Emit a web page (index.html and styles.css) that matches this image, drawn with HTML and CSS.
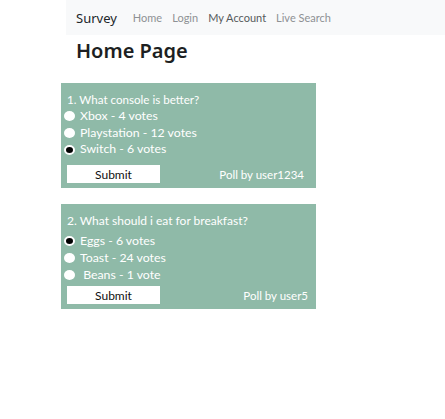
FILE: index.html
```html
<!DOCTYPE html>
<html>
<head>
<meta charset="utf-8">
<link rel="stylesheet" href="styles.css">
</head>
<body>
<nav class="navbar">
  <span class="brand">Survey</span>
  <a class="nav-link">Home</a>
  <a class="nav-link">Login</a>
  <a class="nav-link active">My Account</a>
  <a class="nav-link">Live Search</a>
</nav>
<h1 class="title">Home Page</h1>
<main class="polls">
  <form class="poll">
    <div class="question">1. What console is better?</div>
    <label class="option"><span class="radio"></span>Xbox - 4 votes</label>
    <label class="option"><span class="radio"></span>Playstation - 12 votes</label>
    <label class="option"><span class="radio checked"></span>Switch - 6 votes</label>
    <div class="poll-footer">
      <button type="button" class="submit">Submit</button>
      <span class="author">Poll by user1234</span>
    </div>
  </form>
  <form class="poll">
    <div class="question q2">2. What should i eat for breakfast?</div>
    <label class="option"><span class="radio checked"></span>Eggs - 6 votes</label>
    <label class="option"><span class="radio"></span>Toast - 24 votes</label>
    <label class="option"><span class="radio"></span>&nbsp;Beans - 1 vote</label>
    <div class="poll-footer f2">
      <button type="button" class="submit">Submit</button>
      <span class="author">Poll by user5</span>
    </div>
  </form>
</main>
</body>
</html>
```
FILE: styles.css
```css
body {
  margin: 0;
  background: #fff;
  font-family: "Noto Sans", "Open Sans", sans-serif;
}
.navbar {
  margin-left: 66px;
  height: 35px;
  background: #f8f9fa;
  display: flex;
  align-items: center;
  padding: 0 10px;
  gap: 10px;
}
.brand {
  font-size: 13px;
  color: #212529;
  margin-right: 6px;
}
.nav-link {
  font-family: "Lato", sans-serif;
  font-size: 11px;
  color: #8e9194;
}
.nav-link.active {
  color: #56595c;
}
.title {
  margin: 2px 0 0 76px;
  font-size: 20px;
  font-weight: 600;
  color: #1d1f22;
  line-height: 28px;
}
.polls {
  margin: 18px 0 0 61px;
  display: flex;
  flex-direction: column;
  gap: 16px;
}
.poll {
  width: 255px;
  background: #8fbaa8;
  color: #fff;
  font-family: "Lato", sans-serif;
  font-size: 12.3px;
  padding: 8px 0 5px 0;
  box-sizing: border-box;
}
.question {
  padding-left: 6px;
  line-height: 17px;
  font-size: 11.6px;
}
.q2 {
  font-size: 12px;
  margin-bottom: 4px;
}
.option {
  display: flex;
  align-items: center;
  gap: 5px;
  line-height: 16.7px;
  padding-left: 3px;
}
.radio {
  width: 11px;
  height: 10px;
  border-radius: 50%;
  background: #fff;
  box-sizing: border-box;
}
.radio.checked {
  border: 2px solid #fff;
  background: #000;
}
.poll-footer {
  display: flex;
  justify-content: space-between;
  align-items: flex-end;
  padding: 0 12px 0 6px;
  margin-top: 7px;
}
.f2 {
  margin-top: 3px;
  padding-right: 8px;
}
.submit {
  width: 93px;
  height: 18px;
  border: 0;
  background: #fff;
  font-family: "Lato", sans-serif;
  font-size: 12px;
  color: #111;
  padding: 0;
}
.author {
  font-size: 11.5px;
  line-height: 16px;
}
```
